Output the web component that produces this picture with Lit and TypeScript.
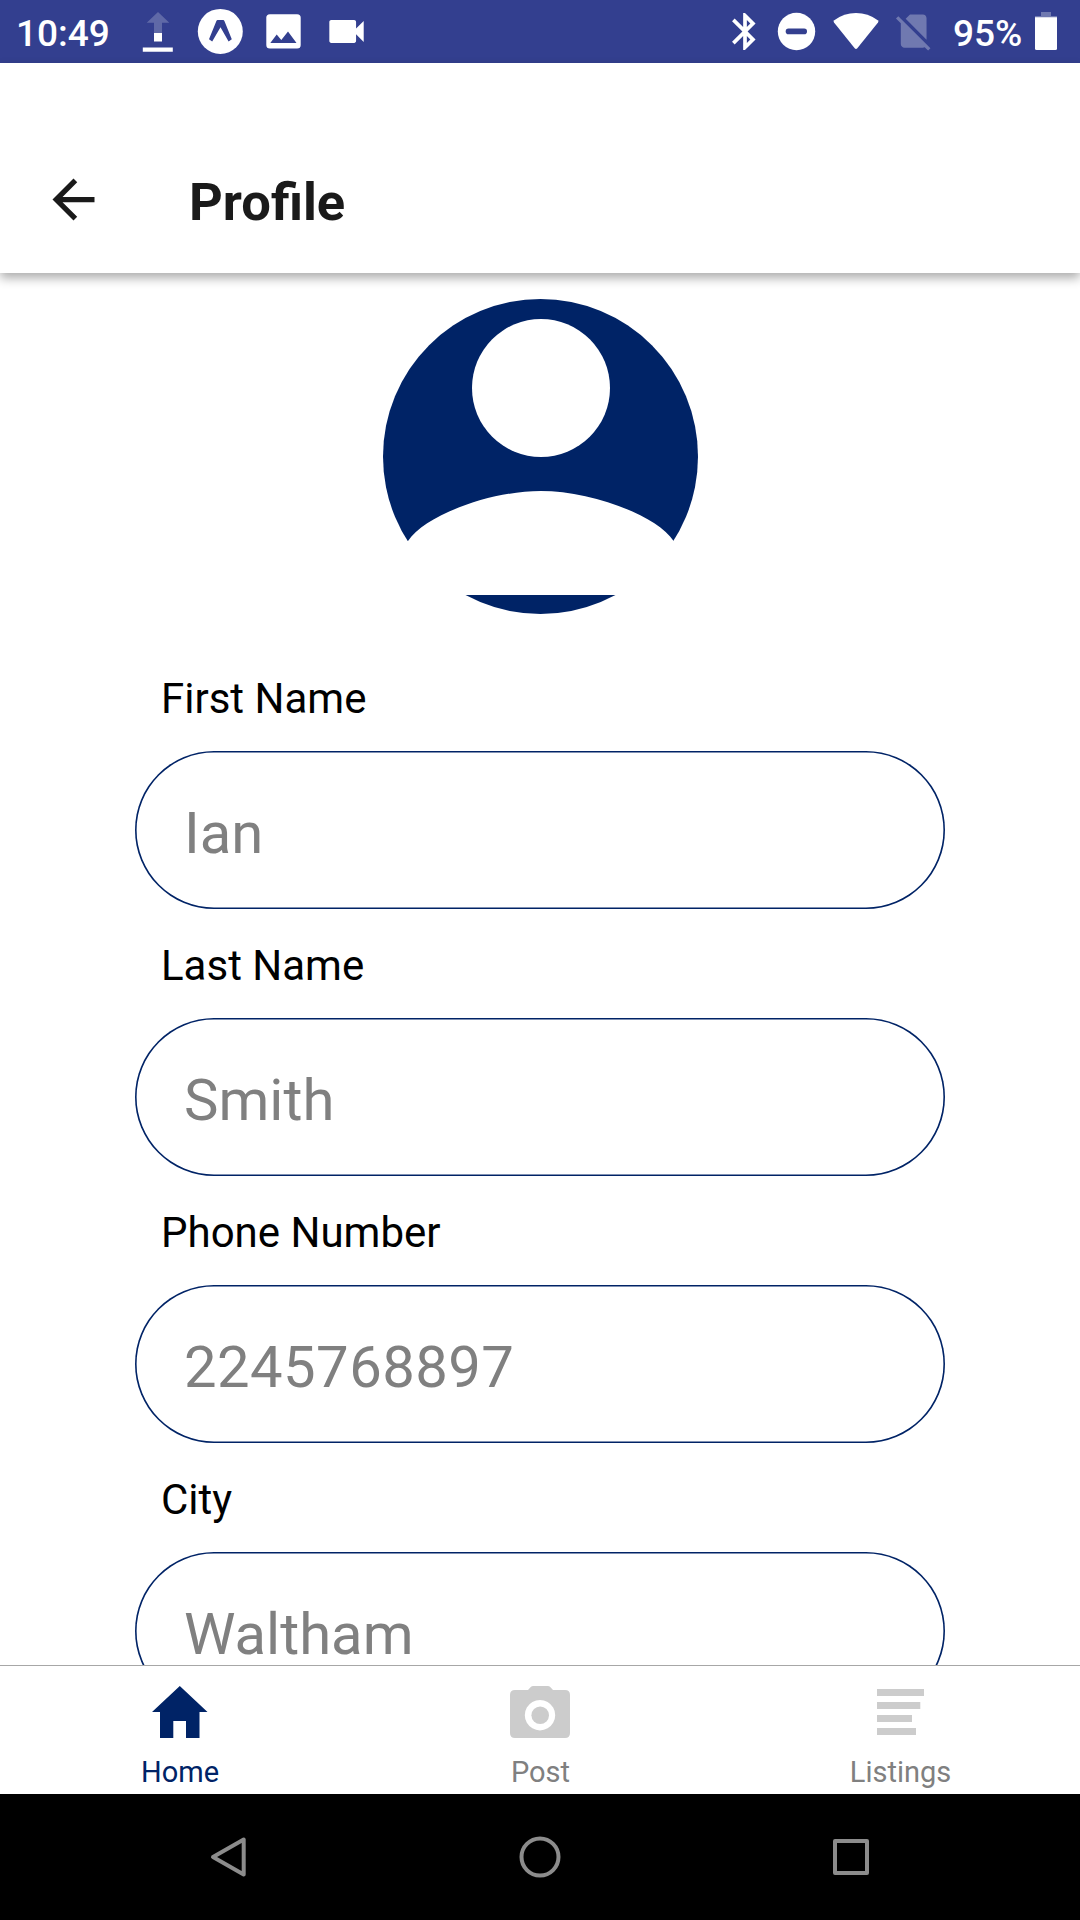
import { LitElement, html, css, svg } from "lit";
import { customElement } from "lit/decorators.js";
import { classMap } from "lit/directives/class-map.js";

const BAR = "#333f8f";

@customElement("status-bar")
class StatusBar extends LitElement {
  static styles = css`
    :host { display: flex; height: 63px; background: #333f8f; color: #fff; overflow: hidden;
      font: 500 37px/63px Roboto, "Liberation Sans", sans-serif; }
    .time { box-sizing: border-box; width: 130px; padding: 2px 0 0 16px; }
    .spacer { flex: 1; }
    .battery-text { box-sizing: border-box; width: 80px; padding-top: 2px; }
    svg { display: block; flex: none; fill: #fff; }
  `;
  private cell(x: number, w: number, content: unknown) {
    return html`<svg width=${w} height="63" viewBox="${x} 0 ${w} 63">${content}</svg>`;
  }
  render() {
    return html`
      <div class="time">10:49</div>
      ${this.cell(130, 60, svg`
        <path opacity=".22" d="M158 12L169.3 22.8H162V33H154V22.8H146.7Z"/>
        <path d="M154 33h8v8.5h-8zM142.8 47.5h30v4.2h-30z"/>`)}
      ${this.cell(190, 60, svg`
        <circle cx="220.3" cy="31.4" r="22.5"/>
        <path fill=${BAR} d="M217.6 20h5.6q.8 0 1.2.9L231.8 39.2 228.6 41.6 220.5 27.2 212.2 41.6 209 39.2 216.4 20.9q.4-.9 1.2-.9z"/>`)}
      ${this.cell(250, 65, svg`
        <rect x="266.3" y="14.2" width="34.4" height="34.4" rx="3.6"/>
        <path fill=${BAR} d="M270.3 43L276.7 34.5 281.3 39.9 288 31.5 296.5 43z"/>`)}
      ${this.cell(315, 60, svg`
        <path transform="translate(323.6 8.5) scale(1.91)" d="M17 10.5V7c0-.55-.45-1-1-1H4c-.55 0-1 .45-1 1v10c0 .55.45 1 1 1h12c.55 0 1-.45 1-1v-3.5l4 4v-11l-4 4z"/>`)}
      <div class="spacer"></div>
      ${this.cell(720, 50, svg`
        <path transform="translate(722.8 9.3) scale(1.85)" d="M17.71 7.71L12 2h-1v7.59L6.41 5 5 6.41 10.59 12 5 17.59 6.41 19 11 14.41V22h1l5.71-5.71-4.3-4.29 4.3-4.29zM13 5.83l1.88 1.88L13 9.59V5.83zm1.88 10.46L13 18.17v-3.76l1.88 1.88z"/>`)}
      ${this.cell(770, 55, svg`
        <circle cx="796.5" cy="31.5" r="18.7"/>
        <rect x="785.7" y="28.6" width="21.3" height="5.6" rx="2.8" fill=${BAR}/>`)}
      ${this.cell(825, 62, svg`
        <path d="M834.3 20.2Q844 13 856 13T877.7 20.2Q879 21.2 878 22.5L857.3 48.3Q856 49.8 854.7 48.3L834 22.5Q833 21.2 834.3 20.2z"/>`)}
      ${this.cell(887, 66, svg`
        <path opacity=".3" transform="translate(891.6 9) scale(1.84)" d="M18.99 5c0-1.1-.89-2-1.99-2h-7L7.66 5.34 19 16.68 18.99 5zM3.65 3.88L2.38 5.15 5 7.77V19c0 1.1.9 2 2 2h10.01c.35 0 .67-.1.96-.26l1.88 1.88 1.27-1.27L3.65 3.88z"/>`)}
      <div class="battery-text">95%</div>
      ${this.cell(1033, 47, svg`
        <path opacity=".3" d="M1041 12h10v4h6v2h-22v-2h6z"/>
        <path d="M1035 17.3h22V48.5q0 1.5-1.5 1.5h-19q-1.5 0-1.5-1.5z"/>`)}
    `;
  }
}

@customElement("app-header")
class AppHeader extends LitElement {
  static styles = css`
    :host { display: flex; box-sizing: border-box; height: 210px; padding-top: 63px; align-items: center;
      background: #fff; position: relative; z-index: 1; box-shadow: 0 5px 10px rgba(0, 0, 0, 0.33); }
    .back { display: block; margin-left: 42px; fill: #1a1a1a; }
    .title { margin: 0 0 0 84px; padding-top: 4px; color: #1a1a1a; font: 700 52.5px/62px Roboto, "Liberation Sans", sans-serif; }
  `;
  render() {
    return html`
      <svg class="back" width="63" height="63" viewBox="0 0 24 24"><path d="M20 11H7.83l5.59-5.59L12 4l-8 8 8 8 1.41-1.41L7.83 13H20v-2z"/></svg>
      <h1 class="title">Profile</h1>`;
  }
}

@customElement("profile-form")
class ProfileForm extends LitElement {
  static styles = css`
    :host { display: flex; flex-direction: column; align-items: center; background: #fff; overflow: hidden;
      font-family: Roboto, "Liberation Sans", sans-serif; }
    .avatar { display: block; flex: none; margin: 26px 0 0 1px; }
    .field { display: flex; flex-direction: column; flex: none; width: 810px; height: 267px; }
    .fields { padding-top: 60px; }
    .label { height: 77px; padding-left: 26px; font-size: 42px; line-height: 50px; color: #000; }
    .input { box-sizing: border-box; width: 810px; height: 158px; flex: none; border: 0; border-radius: 79px; outline: 0;
      padding: 5px 49px 0; background: #fff; box-shadow: inset 0 0 0 1.6px #002366;
      font: 400 58px Roboto, "Liberation Sans", sans-serif; }
    .input.numeric { letter-spacing: 0.43px; }
    .input::placeholder { color: #808080; opacity: 1; }
  `;
  private fields = [
    { label: "First Name", value: "Ian", numeric: false },
    { label: "Last Name", value: "Smith", numeric: false },
    { label: "Phone Number", value: "2245768897", numeric: true },
    { label: "City", value: "Waltham", numeric: false },
  ];
  render() {
    return html`
      <svg class="avatar" width="315" height="315" viewBox="383 299 315 315">
        <circle cx="540.5" cy="456.5" r="157.5" fill="#002366"/>
        <circle cx="541" cy="388" r="69" fill="#fff"/>
        <path fill="#fff" d="M383 595V541H408C425 515 491 491 540.8 491S656.6 515 673.6 541H698V595z"/>
      </svg>
      <div class="fields">
        ${this.fields.map((f) => html`
          <label class="field">
            <span class="label">${f.label}</span>
            <input class=${classMap({ input: true, numeric: f.numeric })} placeholder=${f.value} />
          </label>`)}
      </div>`;
  }
}

@customElement("tab-bar")
class TabBar extends LitElement {
  static styles = css`
    :host { display: grid; grid-template-columns: repeat(3, 1fr); box-sizing: border-box; height: 129px;
      border-top: 1px solid #a7a7a7; background: #fff; font: 400 29px/34px Roboto, "Liberation Sans", sans-serif; }
    .tab { display: flex; flex-direction: column; align-items: center; color: #808080; }
    .tab.active { color: #002366; }
    .icon { display: block; margin-top: 16px; flex: none; fill: #ccc; }
    .active .icon { fill: #002366; }
    .label { margin-top: 17px; padding-left: 1px; }
    .active .label { padding-left: 0; }
  `;
  render() {
    return html`
      <div class="tab active">
        <svg class="icon" width="64" height="56" viewBox="148 1682 64 56"><path d="M179.8 1686L207.5 1712H199.5V1738H186V1721H173.3V1738H160V1712H152z"/></svg>
        <span class="label">Home</span>
      </div>
      <div class="tab">
        <svg class="icon" width="64" height="56" viewBox="508 1682 64 56">
          <path fill-rule="evenodd" d="M528 1690L530.5 1687.2Q531.7 1686 533.3 1686H547.7Q549.3 1686 550.5 1687.2L553 1690H565Q570 1690 570 1695V1733Q570 1738 565 1738H515Q510 1738 510 1733V1695Q510 1690 515 1690zM540 1700a15.2 15.2 0 1 0 .01 0z"/>
          <circle cx="540.2" cy="1715.3" r="8.8"/>
        </svg>
        <span class="label">Post</span>
      </div>
      <div class="tab">
        <svg class="icon" width="64" height="56" viewBox="868 1682 64 56"><path d="M877 1689h47v7h-47zM877 1702h43.3v7h-43.3zM877 1715h35v7h-35zM877 1728h39v7h-39z"/></svg>
        <span class="label">Listings</span>
      </div>`;
  }
}

@customElement("system-nav")
class SystemNav extends LitElement {
  static styles = css`
    :host { display: flex; justify-content: space-between; align-items: center; box-sizing: border-box;
      height: 126px; padding: 0 198px; background: #000; }
    svg { display: block; fill: none; stroke: #8c8c8c; stroke-width: 4; stroke-linejoin: round; }
  `;
  render() {
    return html`
      <svg width="62" height="62" viewBox="198 1826 62 62"><path d="M243.7 1839.5V1874.5L213 1857z"/></svg>
      <svg width="62" height="62" viewBox="509 1826 62 62"><circle cx="540" cy="1857" r="18.5"/></svg>
      <svg width="62" height="62" viewBox="820 1826 62 62"><rect x="835" y="1841" width="32" height="32"/></svg>`;
  }
}

@customElement("app-root")
class AppRoot extends LitElement {
  static styles = css`
    :host { display: grid; grid-template-rows: 63px 210px 1392px 129px 126px; width: 1080px; height: 1920px;
      overflow: hidden; background: #fff; }
  `;
  render() {
    return html`
      <status-bar></status-bar>
      <app-header></app-header>
      <profile-form></profile-form>
      <tab-bar></tab-bar>
      <system-nav></system-nav>`;
  }
}
